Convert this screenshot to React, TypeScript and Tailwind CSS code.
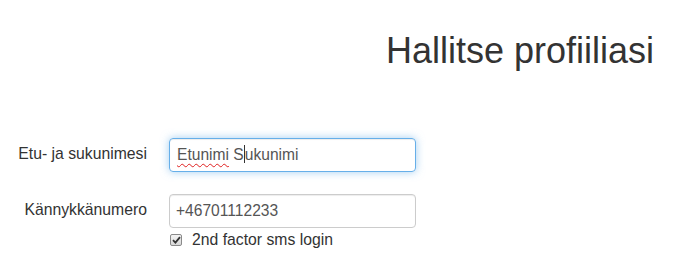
import React from 'react';

const Field = ({ label, children }: { label: string; children: React.ReactNode }) => (
  <div className="flex items-start">
    <label className="w-[147px] shrink-0 text-right text-[15.75px] leading-[34px] -mt-[1px] text-[#333]">{label}</label>
    <div className="ml-[22px] w-[247px]">{children}</div>
  </div>
);

const App = () => {
  return (
    <div
      className="w-[696px] h-[275px] bg-white text-[#333] overflow-hidden"
      style={{ fontFamily: '"Liberation Sans", Arial, sans-serif' }}
    >
      <h1 className="pt-[31px] pl-[386px] text-[36px] leading-[40px] font-normal text-[#333]">
        Hallitse profiiliasi
      </h1>

      <div className="mt-[67px] flex flex-col">
        {/* Name */}
        <Field label="Etu- ja sukunimesi">
          <div className="h-[34px] rounded-[4px] border border-[#66afe9] px-[7px] text-[15.6px] leading-[32px] text-[#555] shadow-[inset_0_1px_1px_rgba(0,0,0,0.075),0_0_8px_rgba(102,175,233,0.6)]">
            <span className="underline decoration-wavy decoration-[#e02020] decoration-1 underline-offset-[3px]">Etunimi</span>{' '}
            S<span className="inline-block w-px h-[18px] bg-[#333] align-[-3px]" />ukunimi
          </div>
        </Field>

        {/* Phone */}
        <div className="mt-[22px]">
          <Field label="Kännykkänumero">
            <div className="h-[34px] rounded-[4px] border border-[#ccc] px-[6px] text-[15.6px] leading-[32px] text-[#555] shadow-[inset_0_1px_1px_rgba(0,0,0,0.075)]">
              +46701112233
            </div>
            <label className="mt-[2px] flex items-center text-[15.75px] leading-[20px] text-[#333]">
              <span className="ml-[1px] flex h-[12px] w-[12px] items-center justify-center rounded-[2px] border border-[#8a8a8a] bg-gradient-to-b from-[#f4f4f4] to-[#d8d8d8]">
                <svg width="9" height="8" viewBox="0 0 9 8">
                  <path d="M1 4.2 L3.4 6.6 L8 1.2" fill="none" stroke="#333" strokeWidth="1.8" />
                </svg>
              </span>
              <span className="ml-[10px]">2nd factor sms login</span>
            </label>
          </Field>
        </div>
      </div>
    </div>
  );
};

export default App;
